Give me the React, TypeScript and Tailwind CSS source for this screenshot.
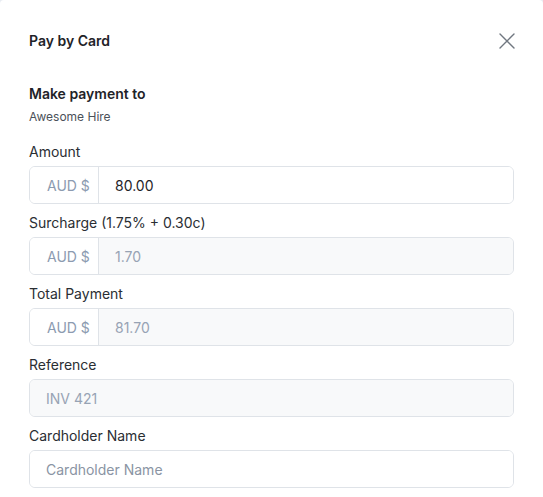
import React from "react";

type FieldProps = {
  label: string;
  value?: string;
  placeholder?: string;
  prefix?: string;
  disabled?: boolean;
};

function Field({ label, value, placeholder, prefix, disabled }: FieldProps) {
  return (
    <div className="flex flex-col">
      <label className="text-[14px] leading-5 text-[#2a2e33] mb-[4px]">{label}</label>
      <div className="flex h-[38px] rounded-md border border-[#dfe3e8] overflow-hidden">
        {prefix && (
          <span className="flex items-center w-[69px] shrink-0 pl-[17px] border-r border-[#dfe3e8] bg-white text-[14px] text-[#8c9bb0]">
            {prefix}
          </span>
        )}
        <input
          readOnly
          disabled={disabled}
          value={value ?? ""}
          placeholder={placeholder}
          className={`flex-1 min-w-0 px-4 text-[14px] outline-none placeholder:text-[#8a94a3] ${
            disabled ? "bg-[#f8f9fa] text-[#97a3b4]" : "bg-white text-[#1f2328]"
          }`}
        />
      </div>
    </div>
  );
}

export default function App() {
  return (
    <div className="w-[543px] h-[497px] bg-[#e8ecf2] overflow-hidden font-['Inter',sans-serif]">
      <div className="h-full bg-white rounded-t-[4px] px-[29px]">
        {/* Header */}
        <div className="flex items-center justify-between pt-[31px] pb-[33px]">
          <h2 className="text-[14px] leading-5 font-semibold text-[#1f2328]">Pay by Card</h2>
          <button aria-label="Close" className="text-[#707780] -mr-[2px]">
            <svg width="18" height="18" viewBox="0 0 18 18" fill="none" stroke="currentColor" strokeWidth="1.4" strokeLinecap="round">
              <path d="M2 2L16 16M16 2L2 16" />
            </svg>
          </button>
        </div>

        {/* Payee */}
        <div className="mb-[17px]">
          <p className="text-[14px] leading-5 font-semibold text-[#1f2328]">Make payment to</p>
          <p className="text-[12px] leading-4 text-[#4b5159] mt-[5px]">Awesome Hire</p>
        </div>

        <div className="flex flex-col gap-[9px]">
          <Field label="Amount" prefix="AUD $" value="80.00" />
          <Field label="Surcharge (1.75% + 0.30c)" prefix="AUD $" value="1.70" disabled />
          <Field label="Total Payment" prefix="AUD $" value="81.70" disabled />
          <Field label="Reference" value="INV 421" disabled />
          <Field label="Cardholder Name" placeholder="Cardholder Name" />
        </div>
      </div>
    </div>
  );
}
